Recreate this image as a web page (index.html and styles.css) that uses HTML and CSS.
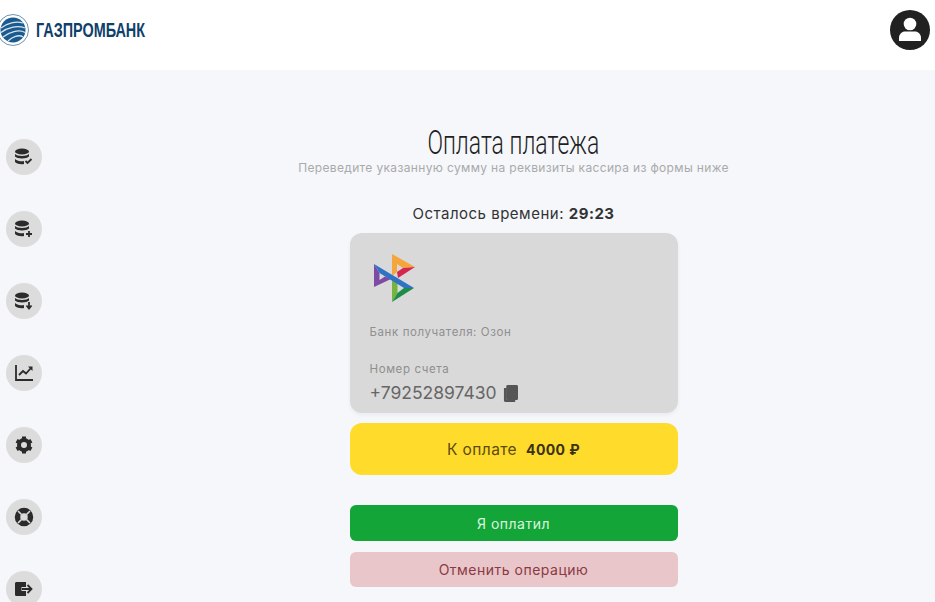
FILE: index.html

```html
<!DOCTYPE html>
<html lang="ru">
<head>
  <meta charset="UTF-8">
  <title>Оплата платежа</title>
  <link rel="stylesheet" href="styles.css">
</head>
<body>
  <header class="topbar">
    <div class="brand">
      <svg class="brand-globe" viewBox="0 0 32 32" width="32" height="32">
        <circle cx="16" cy="16" r="15.500" fill="#fff" stroke="#4a7598" stroke-width="0.800"/>
        <circle cx="16" cy="16" r="12.500" fill="#1b5a8e"/>
        <path d="M4 14C10 9 19 7 26 9M4 18.500C11 13 21 11 28 14M6 23C12 18 22 15 28 18.500M11 27C15 23 22 20 26 23" fill="none" stroke="#d6e4ef" stroke-width="1.300"/>
      </svg>
      <span class="brand-name">ГАЗПРОМБАНК</span>
    </div>
    <svg class="avatar" viewBox="0 0 40 40" width="40" height="40">
      <circle cx="20" cy="20" r="20" fill="#212121"/>
      <circle cx="20" cy="14" r="6.300" fill="#fff"/>
      <path d="M9 31v-3c0-4 3-6.500 6-6.500h10c3 0 6 2.500 6 6.500v3z" fill="#fff"/>
    </svg>
  </header>

  <div class="layout">
    <nav class="sidebar">
      <a class="side-btn">
        <svg viewBox="0 0 20 20" width="20" height="20">
          <ellipse cx="8" cy="4.500" rx="7" ry="3" fill="#2b2b2b"/>
          <path d="M1 7c2 2.500 12 2.500 14 0v2.500c-2 2.500-12 2.500-14 0zM1 12c2 2.500 8 2.500 9 2v3c-2 .5-7 .3-9-2z" fill="#2b2b2b"/>
          <path d="M11.500 14l2 2 4-4" fill="none" stroke="#2b2b2b" stroke-width="1.800"/>
        </svg>
      </a>
      <a class="side-btn">
        <svg viewBox="0 0 20 20" width="20" height="20">
          <ellipse cx="8" cy="4.500" rx="7" ry="3" fill="#2b2b2b"/>
          <path d="M1 7c2 2.500 12 2.500 14 0v2.500c-2 2.500-12 2.500-14 0zM1 12c2 2.500 8 2.500 9 2v3c-2 .5-7 .3-9-2z" fill="#2b2b2b"/>
          <path d="M15 12v6M12 15h6" fill="none" stroke="#2b2b2b" stroke-width="1.800"/>
        </svg>
      </a>
      <a class="side-btn">
        <svg viewBox="0 0 20 20" width="20" height="20">
          <ellipse cx="8" cy="4.500" rx="7" ry="3" fill="#2b2b2b"/>
          <path d="M1 7c2 2.500 12 2.500 14 0v2.500c-2 2.500-12 2.500-14 0zM1 12c2 2.500 8 2.500 9 2v3c-2 .5-7 .3-9-2z" fill="#2b2b2b"/>
          <path d="M15 11v5M12.500 14.500l2.500 3 2.500-3" fill="none" stroke="#2b2b2b" stroke-width="1.800"/>
        </svg>
      </a>
      <a class="side-btn">
        <svg viewBox="0 0 20 20" width="20" height="20">
          <path d="M2 2v15h17" fill="none" stroke="#2b2b2b" stroke-width="1.800"/>
          <path d="M5 12l4-4 3 2.500 5-5.500" fill="none" stroke="#2b2b2b" stroke-width="1.800"/>
          <path d="M14 3.500h4.500v4.500z" fill="#2b2b2b"/>
        </svg>
      </a>
      <a class="side-btn">
        <svg viewBox="0 0 20 20" width="20" height="20">
          <circle cx="10" cy="10" r="5" fill="none" stroke="#2b2b2b" stroke-width="4"/>
          <path d="M10 1.500v4M10 14.500v4M2.600 5.700l3.500 2M13.900 12.300l3.500 2M2.600 14.300l3.500-2M13.900 7.700l3.500-2" stroke="#2b2b2b" stroke-width="4"/>
        </svg>
      </a>
      <a class="side-btn">
        <svg viewBox="0 0 20 20" width="20" height="20">
          <circle cx="10" cy="10" r="6.500" fill="none" stroke="#2b2b2b" stroke-width="5.500"/>
          <path d="M4 4l3.500 3.500M16 4l-3.500 3.500M4 16l3.500-3.500M16 16l-3.500-3.500" stroke="#dcdcdc" stroke-width="1.600"/>
        </svg>
      </a>
      <a class="side-btn">
        <svg viewBox="0 0 20 20" width="20" height="20">
          <path d="M1 4.500c0-1 .8-1.500 1.500-1.500H12v5H7.500v4H12v5H2.500c-.7 0-1.500-.5-1.500-1.500z" fill="#2b2b2b"/>
          <path d="M8 10h9M13.500 6l4 4-4 4" fill="none" stroke="#2b2b2b" stroke-width="1.800"/>
        </svg>
      </a>
    </nav>

    <main class="content">
      <h1 class="title">Оплата платежа</h1>
      <p class="subtitle">Переведите указанную сумму на реквизиты кассира из формы ниже</p>
      <p class="timer">Осталось времени: <b>29:23</b></p>

      <section class="card">
        <svg class="bank-logo" viewBox="0 0 42 50" width="42" height="50">
          <path d="M19 1L42 14 30 15 24 11V19L19 23z" fill="#f4a63c"/>
          <path d="M42 14L25 25 24 19 30 15z" fill="#d3274f"/>
          <path d="M1 34V11L6.500 20V27L12 23.500 18 26z" fill="#7d4aa6"/>
          <path d="M19 26L24.500 30V40L19 49z" fill="#74b43f"/>
          <path d="M41 35L19 49 24.500 40 31 35z" fill="#1c8c4a"/>
          <path d="M1 11L41 35H31L6.500 20z" fill="#2f74c4"/>
        </svg>
        <p class="card-label bank-name">Банк получателя: Озон</p>
        <p class="card-label">Номер счета</p>
        <div class="account">
          <span>+79252897430</span>
          <svg viewBox="0 0 16 18" width="15" height="17">
            <path d="M1 3h3v13h9v2H2.500C1.500 18 1 17.500 1 16.500z" fill="#555"/>
            <rect x="3.500" y="0" width="12.500" height="16" rx="1.500" fill="#555"/>
          </svg>
        </div>
      </section>

      <div class="amount">К оплате <b>4000 ₽</b></div>
      <button class="btn btn-paid">Я оплатил</button>
      <button class="btn btn-cancel">Отменить операцию</button>
    </main>
  </div>
</body>
</html>
```

FILE: styles.css

```css
html, body {
  height: 602px;
}

body {
  margin: 0;
  overflow: hidden;
  background-color: #f5f7fb;
  font-family: "Inter", "Noto Sans", sans-serif;
  color: #333;
}

p, h1 {
  margin: 0;
}

.topbar {
  height: 70px;
  background-color: #fff;
  display: flex;
  justify-content: space-between;
  align-items: center;
  padding-right: 5px;
  box-sizing: border-box;
}

.brand {
  display: flex;
  align-items: center;
  gap: 7px;
  margin-left: -3px;
  margin-top: -10px;
}

.brand-name {
  font-family: "Liberation Sans", sans-serif;
  font-weight: bold;
  font-size: 20px;
  color: #0f3f6b;
  transform: scaleX(0.72);
  transform-origin: left center;
}

.avatar {
  margin-top: -10px;
}

.layout {
  display: flex;
}

.sidebar {
  width: 92px;
  flex-shrink: 0;
  padding: 69px 0 0 6px;
  box-sizing: border-box;
  display: flex;
  flex-direction: column;
  gap: 36px;
}

.side-btn {
  width: 36px;
  height: 36px;
  border-radius: 50%;
  background-color: #dcdcdc;
  display: flex;
  align-items: center;
  justify-content: center;
}

.content {
  flex: 1;
  display: flex;
  flex-direction: column;
  align-items: center;
  padding-top: 54px;
}

.title {
  font-family: "Roboto", sans-serif;
  font-weight: 300;
  font-size: 34px;
  line-height: 36px;
  color: #1f1f1f;
  transform: scaleX(0.675);
}

.subtitle {
  font-size: 12px;
  line-height: 16px;
  letter-spacing: 0.35px;
  color: #aaa;
}

.timer {
  font-size: 15px;
  line-height: 20px;
  letter-spacing: 0.5px;
  margin-top: 28px;
  color: #333;
}

.card {
  width: 328px;
  height: 180px;
  margin-top: 9px;
  padding: 20px 19px 0 20px;
  box-sizing: border-box;
  border-radius: 12px;
  background-color: #d9d9d9;
  box-shadow: 0 2px 4px rgba(0, 0, 0, 0.05);
  display: flex;
  flex-direction: column;
  align-items: flex-start;
}

.bank-logo {
  display: block;
  flex-shrink: 0;
  margin-left: 3px;
}

.card-label {
  font-size: 11.500px;
  line-height: 16px;
  letter-spacing: 0.6px;
  color: #8f8f8f;
}

.bank-name {
  margin-top: 21px;
  margin-bottom: 21px;
}

.account {
  display: flex;
  align-items: center;
  gap: 6px;
  margin-top: 5px;
  font-size: 17.500px;
  line-height: 22px;
  color: #666;
}

.amount {
  width: 328px;
  height: 52px;
  margin-top: 10px;
  border-radius: 12px;
  background-color: #ffdc2b;
  display: flex;
  align-items: center;
  justify-content: center;
  gap: 9px;
  font-size: 15.500px;
  letter-spacing: 0.4px;
  color: #5a4a10;
}

.amount b {
  font-size: 14px;
  color: #3a3116;
}

.btn {
  width: 328px;
  height: 36px;
  border: none;
  border-radius: 6px;
  font-family: inherit;
  font-size: 14px;
  letter-spacing: 0.5px;
  display: block;
}

.btn-paid {
  margin-top: 30px;
  background-color: #14a538;
  color: #d8f5de;
}

.btn-cancel {
  height: 35px;
  margin-top: 11px;
  background-color: #e9c6c9;
  color: #8a3a44;
}
```
